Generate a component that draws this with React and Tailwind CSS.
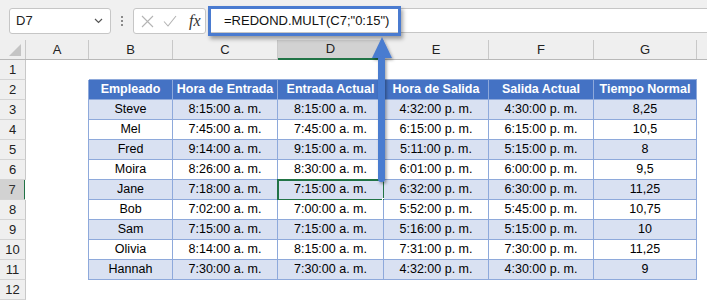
import React from 'react';

const COLS = [
  { key: 'A', w: 'w-[63px]' },
  { key: 'B', w: 'w-[84px]' },
  { key: 'C', w: 'w-[105px]' },
  { key: 'D', w: 'w-[106px]' },
  { key: 'E', w: 'w-[105px]' },
  { key: 'F', w: 'w-[105px]' },
  { key: 'G', w: 'w-[103px]' },
];

const HEADERS = ['Empleado', 'Hora de Entrada', 'Entrada Actual', 'Hora de Salida', 'Salida Actual', 'Tiempo Normal'];

const DATA = [
  ['Steve', '8:15:00 a. m.', '8:15:00 a. m.', '4:32:00 p. m.', '4:30:00 p. m.', '8,25'],
  ['Mel', '7:45:00 a. m.', '7:45:00 a. m.', '6:15:00 p. m.', '6:15:00 p. m.', '10,5'],
  ['Fred', '9:14:00 a. m.', '9:15:00 a. m.', '5:11:00 p. m.', '5:15:00 p. m.', '8'],
  ['Moira', '8:26:00 a. m.', '8:30:00 a. m.', '6:01:00 p. m.', '6:00:00 p. m.', '9,5'],
  ['Jane', '7:18:00 a. m.', '7:15:00 a. m.', '6:32:00 p. m.', '6:30:00 p. m.', '11,25'],
  ['Bob', '7:02:00 a. m.', '7:00:00 a. m.', '5:52:00 p. m.', '5:45:00 p. m.', '10,75'],
  ['Sam', '7:15:00 a. m.', '7:15:00 a. m.', '5:16:00 p. m.', '5:15:00 p. m.', '10'],
  ['Olivia', '8:14:00 a. m.', '8:15:00 a. m.', '7:31:00 p. m.', '7:30:00 p. m.', '11,25'],
  ['Hannah', '7:30:00 a. m.', '7:30:00 a. m.', '4:32:00 p. m.', '4:30:00 p. m.', '9'],
];

function Toolbar() {
  return (
    <div className="h-[40px] flex items-start pt-[8px] bg-[#f0f0f0]">
      {/* Name box */}
      <div className="ml-[9px] w-[102px] h-[26px] bg-white border border-[#c6c6c6] rounded-[3px] flex items-center justify-between pl-[6px] pr-[7px]">
        <span className="text-[13px] text-[#222]">D7</span>
        <svg width="9" height="6" viewBox="0 0 9 6" fill="none" stroke="#555" strokeWidth="1.2">
          <path d="M1 1l3.5 3.5L8 1" />
        </svg>
      </div>
      {/* Vertical dots */}
      <div className="w-[22px] h-[26px] flex flex-col items-center justify-center gap-[2px]">
        <span className="w-[2px] h-[2px] bg-[#8a8a8a]" />
        <span className="w-[2px] h-[2px] bg-[#8a8a8a]" />
        <span className="w-[2px] h-[2px] bg-[#8a8a8a]" />
      </div>
      {/* Cancel / enter / fx */}
      <div className="w-[73px] h-[26px] bg-white border border-[#c6c6c6] rounded-[3px] flex items-center pl-[7px]">
        <svg width="13" height="13" viewBox="0 0 13 13" stroke="#b4b4b4" strokeWidth="1.1" fill="none">
          <path d="M1 1l11 11M12 1L1 12" />
        </svg>
        <svg className="ml-[9px]" width="14" height="12" viewBox="0 0 14 12" stroke="#b4b4b4" strokeWidth="1.1" fill="none">
          <path d="M1 6.5l4 4.5L13 1" />
        </svg>
        <span className="ml-[12px] text-[16px] leading-none italic text-[#333] font-['Liberation_Serif',serif]">fx</span>
      </div>
      {/* Formula input */}
      <div className="ml-[3px] flex-1 h-[25px] bg-white border-y border-[#c6c6c6] flex items-center pl-[15px]">
        <span className="text-[13px] text-[#111]">=REDOND.MULT(C7;"0:15")</span>
      </div>
    </div>
  );
}

function ColumnHeader() {
  return (
    <div className="flex h-[20px] bg-[#efefef] border-b border-[#b8b8b8]">
      <div className="w-[26px] shrink-0 border-r border-[#c8c8c8] flex items-end justify-end pr-[4px] pb-[3px]">
        <svg width="12" height="12" viewBox="0 0 12 12">
          <path d="M12 0V12H0Z" fill="#c4c4c4" />
        </svg>
      </div>
      {COLS.map(c => (
        <div
          key={c.key}
          className={`${c.w} shrink-0 flex items-center justify-center text-[13px] text-[#222] ${
            c.key === 'D'
              ? 'bg-[#d2d2d2] border-r border-[#c8c8c8] border-b-2 border-b-[#217346] -mb-px'
              : 'border-r border-[#c8c8c8]'
          }`}
        >
          {c.key}
        </div>
      ))}
      <div className="flex-1" />
    </div>
  );
}

function Row({ n }) {
  const inTable = n >= 2 && n <= 11;
  const isHeader = n === 2;
  const values = isHeader ? HEADERS : inTable ? DATA[n - 3] : null;
  const band = n % 2 === 1;

  return (
    <div className="flex h-[20px]">
      <div
        className={`w-[26px] shrink-0 flex items-center justify-center text-[13px] border-b border-[#d4d4d4] ${
          n === 7
            ? 'bg-[#d2d2d2] text-[#333] border-r-2 border-r-[#217346]'
            : 'bg-[#efefef] text-[#222] border-r border-r-[#c8c8c8]'
        }`}
      >
        {n}
      </div>
      {/* Column A */}
      <div className={`w-[63px] shrink-0 bg-white ${inTable ? 'border-r border-[#8ea9db]' : ''} ${n === 7 ? '-ml-px w-[64px]' : ''}`} />
      {COLS.slice(1).map((c, i) => {
        let cls = 'bg-white';
        if (isHeader) cls = 'bg-[#4472c4] text-white font-bold border-r border-b border-[#8ea9db]';
        else if (inTable) cls = `${band ? 'bg-[#d9e1f2]' : 'bg-white'} text-black border-r border-b border-[#8ea9db]`;
        else if (n === 1) cls = 'bg-white border-b border-[#8ea9db]';
        const selected = n === 7 && c.key === 'D';
        return (
          <div key={c.key} className={`${c.w} shrink-0 relative flex items-center justify-center text-[12.5px] whitespace-nowrap ${cls}`}>
            {values ? values[i] : ''}
            {selected && (
              <>
                <div className="absolute left-[-1px] top-[-1px] right-[-2px] bottom-[-2px] border-2 border-[#217346]" />
                <div className="absolute right-[-5px] bottom-[-5px] w-[6px] h-[6px] bg-[#217346] border border-white" />
              </>
            )}
          </div>
        );
      })}
      <div className="flex-1 bg-white" />
    </div>
  );
}

export default function App() {
  const rows = Array.from({ length: 12 }, (_, i) => i + 1);
  return (
    <div className="relative w-[707px] h-[302px] overflow-hidden bg-white font-['Liberation_Sans',Arial,sans-serif]">
      <Toolbar />
      <ColumnHeader />
      {rows.map(n => (
        <Row key={n} n={n} />
      ))}

      {/* Formula highlight */}
      <div className="absolute left-[208px] top-[6px] w-[193px] h-[30px] border-[3px] border-[#4a7bd0] shadow-[2px_3px_4px_rgba(0,0,0,0.35)]" />

      {/* Arrow */}
      <svg className="absolute left-[368px] top-[34px]" width="30" height="154" viewBox="0 0 30 154">
        <defs>
          <filter id="sh" x="-50%" y="-10%" width="200%" height="120%">
            <feDropShadow dx="1.5" dy="2" stdDeviation="1.5" floodColor="#000" floodOpacity="0.35" />
          </filter>
        </defs>
        <g filter="url(#sh)" fill="#4a7bd0">
          <path d="M14 3L24 24H4Z" />
          <rect x="10" y="22" width="7" height="126" rx="3" />
        </g>
      </svg>
    </div>
  );
}
